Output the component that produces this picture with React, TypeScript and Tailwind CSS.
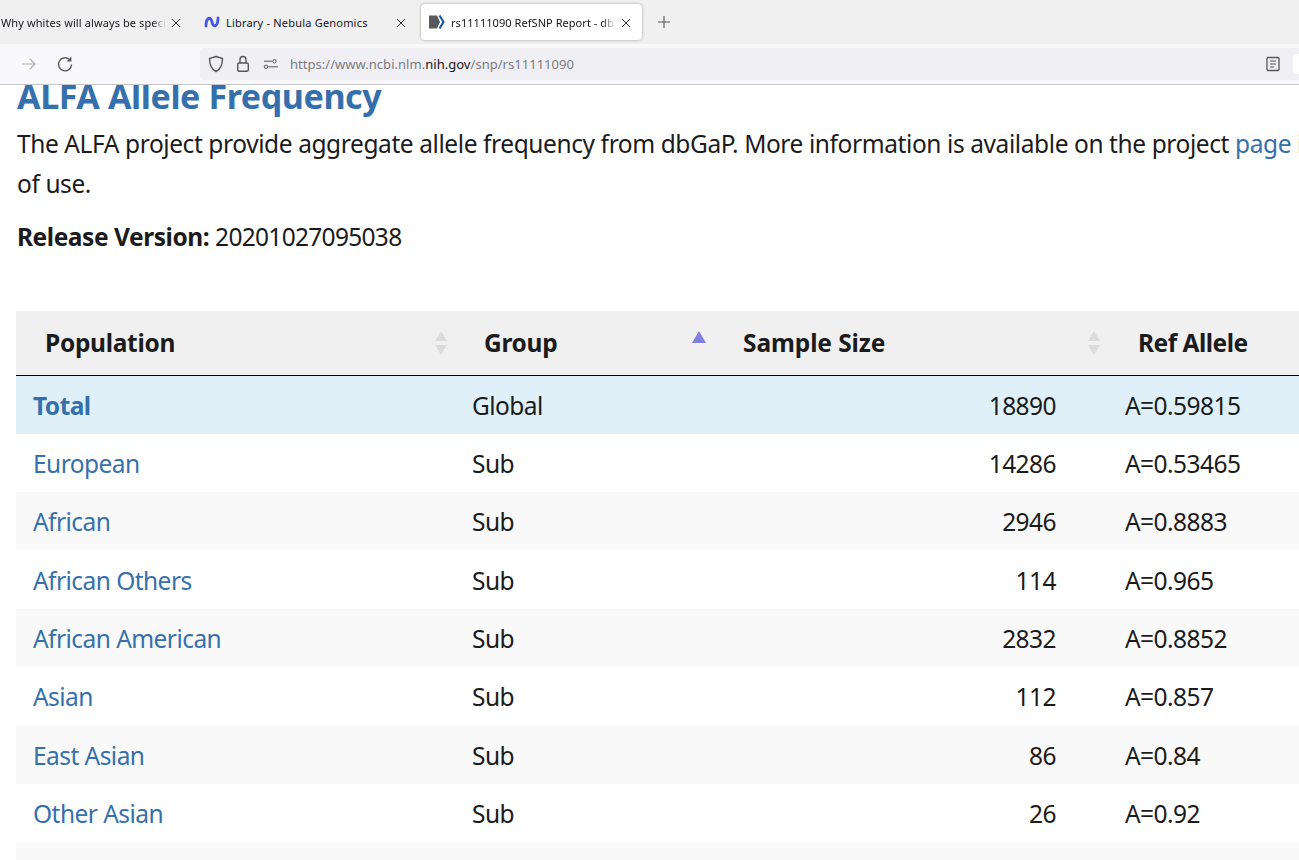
const rows = [
  ["Total", "Global", "18890", "A=0.59815"],
  ["European", "Sub", "14286", "A=0.53465"],
  ["African", "Sub", "2946", "A=0.8883"],
  ["African Others", "Sub", "114", "A=0.965"],
  ["African American", "Sub", "2832", "A=0.8852"],
  ["Asian", "Sub", "112", "A=0.857"],
  ["East Asian", "Sub", "86", "A=0.84"],
  ["Other Asian", "Sub", "26", "A=0.92"],
  ["", "", "", ""],
];

function SortIcon({ active }: { active?: boolean }) {
  if (active) {
    return (
      <svg width="14" height="12" viewBox="0 0 14 12" className="absolute right-[20px] top-[20px]">
        <path d="M7 0 L14 12 L0 12 Z" fill="#8080e0" />
      </svg>
    );
  }
  return (
    <svg width="14" height="24" viewBox="0 0 14 24" className="absolute right-[8px] top-[20px]">
      <path d="M7 0 L13 10 L1 10 Z M7 24 L13 14 L1 14 Z" fill="#dcdcdc" />
    </svg>
  );
}

export default function App() {
  return (
    <div className="flex h-[860px] w-[1299px] flex-col overflow-hidden bg-white font-['Noto_Sans',sans-serif]">
      <div className="flex h-[44px] shrink-0 items-center bg-[#f0f0f1] text-[11px] tracking-[0.2px] text-[#15141a]">
        <div className="flex h-[36px] w-[203px] items-center overflow-hidden pl-[1px] pt-[2px]">
          <span className="w-[165px] overflow-hidden whitespace-nowrap tracking-[0.1px] [mask-image:linear-gradient(to_left,transparent,black_14px)]">Why whites will always be special</span>
          <span className="ml-[5px]"><XIcon /></span>
        </div>
        <div className="flex h-[36px] w-[218px] items-center pt-[2px]">
          <svg width="16" height="14" viewBox="0 0 16 14" className="ml-[1px] mr-[6px] -translate-y-[1px]">
            <path d="M2 11 C2 2 7 1 8 7 C9 13 14 12 14 3" fill="none" stroke="#4455ee" strokeWidth="2.8" strokeLinecap="round" />
          </svg>
          <span className="w-[170px] whitespace-nowrap">Library - Nebula Genomics</span>
          <XIcon />
        </div>
        <div className="flex h-[36px] w-[221px] items-center rounded-[4px] bg-white pt-[2px] shadow-[0_0_3px_rgba(0,0,0,0.35)]">
          <svg width="16" height="14" viewBox="0 0 16 14" className="ml-[8px] mr-[6px] -translate-y-[1px]">
            <path d="M0 0.5 H8 L11 7 L8 13.5 H0 Z" fill="#58585e" />
            <path d="M10.5 0.5 L14.5 7 L10.5 13.5" fill="none" stroke="#1a5a9e" strokeWidth="2.2" />
          </svg>
          <span className="w-[165px] overflow-hidden whitespace-nowrap tracking-[0.05px] [mask-image:linear-gradient(to_left,transparent,black_14px)]">rs11111090 RefSNP Report - dbSNP</span>
          <span className="ml-[5px]"><XIcon /></span>
        </div>
        <svg width="14" height="14" viewBox="0 0 14 14" className="ml-[15px]">
          <path d="M7 1 V13 M1 7 H13" stroke="#55555c" strokeWidth="1.1" />
        </svg>
      </div>

      <div className="flex h-[41px] shrink-0 items-center border-b border-[#c8c8cc] bg-[#f9f9fb]">
        <svg width="16" height="14" viewBox="0 0 16 14" className="ml-[21px]">
          <path d="M1 7 H14 M9 2 L14 7 L9 12" fill="none" stroke="#b4b4b8" strokeWidth="1.2" />
        </svg>
        <svg width="18" height="18" viewBox="0 0 18 18" className="ml-[19px]">
          <path d="M15.5 9.5 A6.5 6.5 0 1 1 13 4.2" fill="none" stroke="#55555c" strokeWidth="1.4" />
          <path d="M15.4 1.6 V6.4 H10.6 Z" fill="#55555c" />
        </svg>
        <div className="ml-[126px] flex h-[32px] flex-1 items-center rounded-l-[4px] bg-[#f0f0f4]">
          <svg width="16" height="18" viewBox="0 0 16 18" className="ml-[8px]">
            <path d="M8 1.5 L14.5 3.5 C14.5 10 13 14 8 16.5 C3 14 1.5 10 1.5 3.5 Z" fill="none" stroke="#55555c" strokeWidth="1.4" />
          </svg>
          <svg width="14" height="18" viewBox="0 0 14 18" className="ml-[12px]">
            <path d="M4 8 V4.5 A3 3 0 0 1 10 4.5 V8" fill="none" stroke="#55555c" strokeWidth="1.4" />
            <rect x="1.7" y="8" width="10.6" height="8.3" rx="1.5" fill="none" stroke="#55555c" strokeWidth="1.4" />
          </svg>
          <svg width="16" height="12" viewBox="0 0 16 12" className="ml-[13px]">
            <circle cx="11.5" cy="3.2" r="1.7" fill="none" stroke="#55555c" />
            <path d="M1 3.2 H9 M5 8.8 H15" stroke="#55555c" />
            <circle cx="3" cy="8.8" r="1.7" fill="none" stroke="#55555c" />
          </svg>
          <span className="ml-[11px] pt-[1px] text-[13px] tracking-[0.03px] text-[#7b7b80]">
            https://www.ncbi.nlm.<span className="text-[#15141a]">nih.gov</span>/snp/rs11111090
          </span>
          <svg width="14" height="16" viewBox="0 0 14 16" className="ml-auto mr-[13px]">
            <rect x="1" y="1.5" width="12" height="13" rx="1" fill="none" stroke="#55555c" strokeWidth="1.3" />
            <path d="M4 5 H10 M4 8 H10 M4 11 H8" stroke="#55555c" strokeWidth="1.2" />
          </svg>
          <div className="h-[20px] w-[6px] rounded-l-[3px] bg-white" />
        </div>
      </div>

      <main className="min-h-0 flex-1 overflow-hidden whitespace-nowrap pl-[16px] text-[24.5px] text-[#1b1b1b]">
        <h2 className="-mt-[14px] h-[53px] pl-[1px] text-[34px] font-bold leading-[50px] tracking-[-0.4px] text-[#3570ac]">ALFA Allele Frequency</h2>
        <p className="pl-[1px] leading-[40px] tracking-[-0.41px]">
          The ALFA project provide aggregate allele frequency from dbGaP. More information is available on the project <span className="text-[#3570ac]">page</span> including descriptions,
          <br />
          of use.
        </p>
        <p className="mt-[13px] h-[40px] pl-[1px] leading-[40px] tracking-[-0.45px]">
          <b className="font-bold">Release Version:</b> <span className="tracking-[-0.7px]">20201027095038</span>
        </p>
        <table className="mt-[54px] w-[1400px] table-fixed border-collapse tracking-[-0.55px]">
          <thead>
            <tr className="h-[64.5px] border-b border-black bg-[#f0f0f0] text-left font-bold tracking-[-0.3px]">
              <th className="relative w-[440px] pl-[29px] pt-[1px]">Population<SortIcon /></th>
              <th className="relative w-[270px] pl-[29px] pt-[1px]"><span className="-ml-[1px]">Group</span><SortIcon active /></th>
              <th className="relative w-[383px] pl-[17px] pt-[1px] tracking-[-0.1px]">Sample Size<SortIcon /></th>
              <th className="relative pl-[29px] pt-[1px] tracking-[-0.5px]">Ref Allele</th>
            </tr>
          </thead>
          <tbody>
            {rows.map((r, i) => (
              <tr key={i} className={`h-[58.33px] ${i === 0 ? "bg-[#dff0f8]" : i % 2 === 0 ? "bg-[#f9f9f9]" : "bg-white"}`}>
                <td className={`pl-[17px] pt-[2.5px] text-[#3570ac] ${i === 0 ? "font-bold" : ""}`}>{r[0]}</td>
                <td className="pl-[16px] pt-[2.5px]">{r[1]}</td>
                <td className="pr-[53px] pt-[2.5px] text-right">{r[2]}</td>
                <td className="pl-[16px] pt-[2.5px]">{r[3]}</td>
              </tr>
            ))}
          </tbody>
        </table>
      </main>
    </div>
  );
}

function XIcon() {
  return (
    <svg width="10" height="10" viewBox="0 0 10 10" className="shrink-0">
      <path d="M1 1 L9 9 M9 1 L1 9" stroke="#33333a" strokeWidth="1" />
    </svg>
  );
}
